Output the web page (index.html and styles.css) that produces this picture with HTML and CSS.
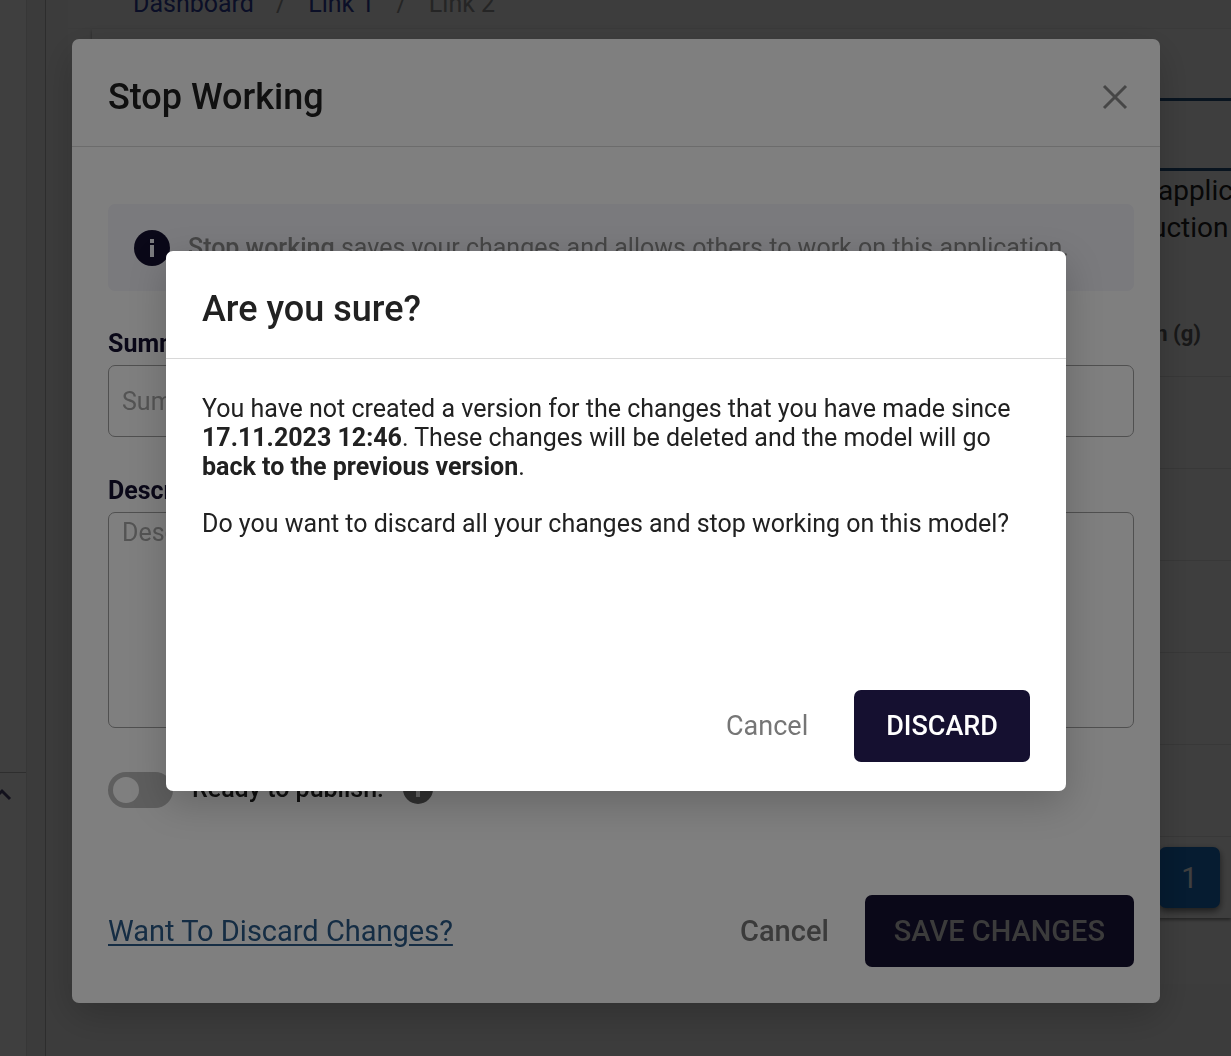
FILE: index.html
```html
<!DOCTYPE html>
<html lang="en">
<head>
<meta charset="utf-8">
<meta name="viewport" content="width=device-width, initial-scale=1">
<title>Stop Working</title>
<link rel="stylesheet" href="styles.css">
</head>
<body>
<div class="app">
  <aside class="sidebar">
    <div class="sidebar-group">
      <svg class="chevron" viewBox="0 0 24 24" aria-hidden="true"><path d="M4 16l8-8 8 8"/></svg>
    </div>
  </aside>
  <div class="gutter"></div>
  <main class="content">
    <div class="page">
      <nav class="breadcrumbs" aria-label="Breadcrumb">
        <a href="#">Dashboard</a><span>/</span><a href="#">Link 1</a><span>/</span><span>Link 2</span>
      </nav>
      <section class="panel">
        <div class="tab-band"></div>
        <p class="intro">&nbsp;application<br>uction</p>
        <table class="grid">
          <thead><tr><th>n (g)</th></tr></thead>
          <tbody>
            <tr><td></td></tr><tr><td></td></tr><tr><td></td></tr><tr><td></td></tr><tr><td></td></tr>
          </tbody>
        </table>
        <div class="pager"><button class="page-button" type="button">1</button></div>
      </section>
    </div>
  </main>
</div>

<div class="overlay">
  <section class="dialog dialog-large" role="dialog" aria-labelledby="stop-title">
    <header class="dialog-header">
      <h2 id="stop-title">Stop Working</h2>
      <button class="close" type="button" aria-label="Close">
        <svg viewBox="0 0 26 26" aria-hidden="true"><path d="M2 2l22 22M24 2L2 24"/></svg>
      </button>
    </header>
    <form class="form">
      <div class="notice">
        <svg class="notice-icon" viewBox="0 0 36 36" aria-hidden="true"><circle cx="18" cy="18" r="18"/><path d="M16 9h4v4h-4zM16 15h4v12h-4z"/></svg>
        <p><strong>Stop working</strong> saves your changes and allows others to work on this application.</p>
      </div>
      <label class="label" for="summary">Summary</label>
      <input class="field" id="summary" type="text" placeholder="Summary">
      <label class="label" for="description">Description</label>
      <textarea class="field area" id="description" placeholder="Description"></textarea>
      <div class="publish">
        <input class="switch" id="publish" type="checkbox">
        <label for="publish">Ready to publish:</label>
        <svg class="hint" viewBox="0 0 30 30" aria-hidden="true"><circle cx="15" cy="15" r="15"/><path d="M13 7h4v3h-4zM13 12h4v11h-4z"/></svg>
      </div>
    </form>
    <footer class="dialog-footer">
      <a class="discard-link" href="#">Want To Discard Changes?</a>
      <button class="text-button strong" type="button">Cancel</button>
      <button class="primary save" type="button">SAVE CHANGES</button>
    </footer>
  </section>
</div>

<div class="overlay">
  <section class="dialog dialog-small" role="dialog" aria-modal="true" aria-labelledby="confirm-title">
    <header class="dialog-header">
      <h2 id="confirm-title">Are you sure?</h2>
    </header>
    <div class="message">
      <p>You have not created a version for the changes that you have made since <strong>17.11.2023 12:46</strong>. These changes will be deleted and the model will go <strong>back to the previous version</strong>.</p>
      <p>Do you want to discard all your changes and stop working on this model?</p>
    </div>
    <footer class="confirm-footer">
      <button class="text-button" type="button">Cancel</button>
      <button class="primary" type="button">DISCARD</button>
    </footer>
  </section>
</div>
</body>
</html>
```
FILE: styles.css
```css
* {
  box-sizing: border-box;
}

body {
  margin: 0;
  overflow: hidden;
  font-family: Roboto, "Liberation Sans", sans-serif;
  font-size: 25px;
  line-height: 29px;
  color: #212121;
  background: #f0f0f0;
}

h2,
p {
  margin: 0;
}

button,
input,
textarea {
  font-family: inherit;
}

button {
  padding: 0;
  border: 0;
  background: none;
  cursor: pointer;
}

/* Page behind the dialogs */
.app {
  display: flex;
  min-height: 100vh;
}

.sidebar {
  display: flex;
  flex-direction: column;
  justify-content: flex-end;
  width: 26px;
  background: #fcfcfc;
  overflow: hidden;
}

.sidebar-group {
  height: 284px;
  padding-top: 10px;
  border-top: 1px solid #b8b8b8;
}

.chevron {
  display: block;
  width: 24px;
  height: 24px;
  margin-left: -10px;
  fill: none;
  stroke: #4b4470;
  stroke-width: 3;
}

.gutter {
  width: 20px;
  border-left: 1px solid #dcdcdc;
  border-right: 1px solid #b4b4b4;
  background: #ececec;
}

.content {
  flex: 1;
  min-width: 0;
  padding-left: 22px;
  background: #f0f0f0;
  overflow: hidden;
}

.page {
  padding-bottom: 66px;
  background: #f6f6f6;
}

.breadcrumbs {
  display: flex;
  gap: 22px;
  height: 29px;
  padding-left: 65px;
  border-bottom: 1px solid #eee;
  line-height: 7px;
  color: #949494;
}

.breadcrumbs a {
  color: #2f3d9c;
  text-decoration: none;
}

.panel {
  margin-left: 24px;
  padding-top: 69px;
  background: #fbfbfb;
  box-shadow: 0 2px 3px #909090;
}

.tab-band {
  height: 73px;
  border-top: 3px solid #24527f;
  border-bottom: 3px solid #24527f;
}

.intro {
  height: 119px;
  margin-left: calc(100% - 80px);
  padding-top: 1px;
  font-size: 28px;
  line-height: 37px;
  white-space: nowrap;
}

.grid {
  width: 100%;
  border-spacing: 0;
}

.grid th,
.grid td {
  height: 92px;
  padding: 0;
  border-bottom: 1px solid #e0e0e0;
}

.grid th {
  height: 87px;
  padding-right: 30px;
  text-align: right;
  font-size: 22px;
  color: #606060;
  background: #f8f8f8;
}

.pager {
  display: flex;
  justify-content: flex-end;
  padding: 10px 11px;
}

.page-button {
  width: 61px;
  height: 61px;
  border-radius: 7px;
  font-size: 29px;
  color: #fff;
  background: #1870c4;
  box-shadow: 0 3px 7px #707070;
}

/* Dialogs */
.overlay {
  position: fixed;
  inset: 0;
  display: flex;
  align-items: center;
  justify-content: center;
  padding: 0 0 14px 1px;
  background: rgba(0, 0, 0, 0.5);
}

.dialog {
  display: flex;
  flex-direction: column;
  border-radius: 7px;
  background: #fff;
  box-shadow: 0 12px 38px rgba(0, 0, 0, 0.2);
}

.dialog-large {
  width: 90%;
  max-width: 1088px;
}

.dialog-small {
  width: 75%;
  max-width: 900px;
  min-height: 540px;
}

.dialog-header {
  display: flex;
  align-items: center;
  justify-content: space-between;
  height: 108px;
  padding: 8px 32px 0 36px;
  border-bottom: 1px solid #d8d8d8;
}

.dialog-header h2 {
  font-size: 36px;
  line-height: 44px;
  font-weight: 500;
}

.close svg {
  display: block;
  width: 26px;
  height: 26px;
  fill: none;
  stroke: #8c8c8c;
  stroke-width: 3;
}

.form {
  display: flex;
  flex-direction: column;
  padding: 57px 26px 0 36px;
}

.notice {
  display: flex;
  align-items: center;
  gap: 18px;
  min-height: 87px;
  margin-bottom: 38px;
  padding: 0 26px;
  border-radius: 7px;
  color: #8c8c8c;
  background: #f4f4fa;
}

.notice-icon {
  flex: none;
  width: 36px;
  height: 36px;
  fill: #151030;
}

.notice-icon path {
  fill: #f4f4fa;
}

.notice strong {
  font-weight: 500;
}

.label {
  margin-bottom: 7px;
  font-weight: 700;
  color: #151030;
}

.field {
  width: 100%;
  height: 72px;
  margin-bottom: 39px;
  padding: 0 13px;
  border: 1px solid #a0a0a0;
  border-radius: 7px;
  font-size: 25px;
  line-height: 29px;
  background: #fff;
}

.field::placeholder {
  color: #a8a8a8;
  opacity: 1;
}

.area {
  height: 216px;
  padding-top: 5px;
  margin-bottom: 44px;
  resize: none;
}

.publish {
  display: flex;
  align-items: flex-start;
  gap: 19px;
}

.publish label {
  padding-top: 2px;
  font-weight: 500;
}

.switch {
  appearance: none;
  display: flex;
  align-items: center;
  width: 65px;
  height: 36px;
  margin: 0;
  padding: 0 5px;
  border-radius: 18px;
  background: #bcbcbc;
}

.switch::before {
  content: "";
  width: 26px;
  height: 26px;
  border-radius: 50%;
  background: #fff;
}

.hint {
  width: 30px;
  height: 30px;
  margin-top: 2px;
  fill: #606060;
}

.hint path {
  fill: #c8c8c8;
}

.dialog-footer {
  display: flex;
  align-items: center;
  padding: 87px 26px 36px 36px;
}

.discard-link {
  margin-right: auto;
  font-size: 29px;
  color: #2a5a88;
  text-underline-offset: 3px;
}

.text-button {
  font-size: 27px;
  color: #767676;
}

.text-button.strong {
  margin-right: 36px;
  font-size: 29px;
  font-weight: 500;
}

.primary {
  height: 72px;
  padding: 0 32px;
  border-radius: 7px;
  font-size: 27px;
  font-weight: 500;
  color: #fff;
  background: #151030;
}

.primary.save {
  padding: 0 29px;
  font-size: 29px;
  color: #767676;
}

.message {
  display: flex;
  flex-direction: column;
  gap: 28px;
  padding: 35px 36px;
}

.confirm-footer {
  display: flex;
  align-items: center;
  justify-content: flex-end;
  gap: 46px;
  margin-top: auto;
  padding: 0 36px 29px;
}
```
